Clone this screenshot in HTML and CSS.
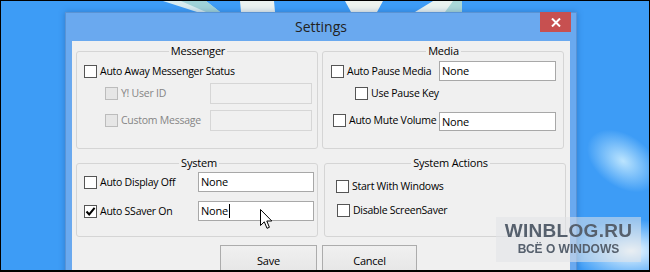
FILE: index.html
```html
<!DOCTYPE html>
<html lang="en">
<head>
<meta charset="utf-8">
<title>Settings</title>
<link rel="stylesheet" href="styles.css">
</head>
<body>
<div class="screen">
  <svg class="wallpaper" width="648" height="270" viewBox="0 0 648 270" aria-hidden="true">
    <defs>
      <radialGradient id="glow1" cx="0.5" cy="0.5" r="0.5">
        <stop offset="0" stop-color="#c9ecff" stop-opacity="0.9"/>
        <stop offset="1" stop-color="#c9ecff" stop-opacity="0"/>
      </radialGradient>
      <radialGradient id="glow2" cx="0.5" cy="0.5" r="0.5">
        <stop offset="0" stop-color="#f2fbff" stop-opacity="1"/>
        <stop offset="1" stop-color="#e6f7ff" stop-opacity="0"/>
      </radialGradient>
    </defs>
    <polygon points="162,0 205,0 219,11 196,11" fill="#d8ecef"/>
    <polygon points="180,0 205,0 219,11 205,11" fill="#9fd2d8"/>
    <polygon points="239,0 273,0 274,11 240,11" fill="#eaf2f0"/>
    <polygon points="344,0 382,0 376,11 350,11" fill="#edf3ef"/>
    <polygon points="432,0 461,0 461,11 414,11" fill="#e9f3f0"/>
    <polygon points="452,0 461,0 461,11 444,11" fill="#a9d8d8"/>
    <ellipse cx="622" cy="160" rx="40" ry="26" fill="url(#glow1)" transform="rotate(35 622 160)"/>
    <ellipse cx="630" cy="250" rx="60" ry="32" fill="url(#glow2)"/>
  </svg>

  <div class="window">
    <div class="titlebar">
      <span></span>
      <span class="title">Settings</span>
      <span class="close-btn">
        <svg width="10" height="9" viewBox="0 0 10 9" aria-hidden="true"><path d="M1 0.5 L9 8.5 M9 0.5 L1 8.5" stroke="#fff" stroke-width="2"/></svg>
      </span>
    </div>
    <div class="client">
      <div class="groups top-groups">
        <fieldset class="group messenger">
          <legend>Messenger</legend>
          <div class="row">
            <span class="cb"></span><span class="lbl">Auto Away Messenger Status</span>
          </div>
          <div class="row indent-m">
            <span class="cb disabled"></span><span class="lbl dim">Y! User ID</span>
            <span class="tb disabled tb-m"></span>
          </div>
          <div class="row indent-m gap5">
            <span class="cb disabled"></span><span class="lbl dim">Custom Message</span>
            <span class="tb disabled tb-m"></span>
          </div>
        </fieldset>
        <fieldset class="group media">
          <legend>Media</legend>
          <div class="row">
            <span class="cb"></span><span class="lbl">Auto Pause Media</span>
            <span class="tb tb-media">None</span>
          </div>
          <div class="row indent-k">
            <span class="cb"></span><span class="lbl">Use Pause Key</span>
          </div>
          <div class="row indent-v gap5">
            <span class="cb"></span><span class="lbl">Auto Mute Volume</span>
            <span class="tb tb-media low">None</span>
          </div>
        </fieldset>
      </div>

      <div class="groups bottom-groups">
        <fieldset class="group system">
          <legend>System</legend>
          <div class="row r20">
            <span class="cb"></span><span class="lbl">Auto Display Off</span>
            <span class="tb tb-sys">None</span>
          </div>
          <div class="row r20 gap9">
            <span class="cb checked">
              <svg width="11" height="11" viewBox="0 0 11 11" aria-hidden="true"><path d="M1.5 5.5 L4.2 8.4 L9.6 1.8" fill="none" stroke="#000" stroke-width="2"/></svg>
            </span><span class="lbl">Auto SSaver On</span>
            <span class="tb tb-sys">None<span class="caret"></span></span>
          </div>
        </fieldset>
        <fieldset class="group actions">
          <legend>System Actions</legend>
          <div class="row r20">
            <span class="cb"></span><span class="lbl">Start With Windows</span>
          </div>
          <div class="row r20 gap4 indent-1">
            <span class="cb"></span><span class="lbl">Disable ScreenSaver</span>
          </div>
        </fieldset>
      </div>

      <div class="buttons">
        <span class="btn save">Save</span>
        <span class="btn cancel">Cancel</span>
      </div>
    </div>
  </div>

  <svg class="pointer" width="13" height="21" viewBox="0 0 13 21" aria-hidden="true">
    <path d="M0.5 0.5 L0.5 16.5 L4.3 12.8 L7 19.3 L9.4 18.3 L6.8 12 L11.8 12 Z" fill="#fff" stroke="#000" stroke-width="1" stroke-linejoin="miter"/>
  </svg>

  <div class="watermark">
    <div class="wm-big">WINBLOG.RU</div>
    <div class="wm-small">ВСЁ О WINDOWS</div>
  </div>
</div>
</body>
</html>
```

FILE: styles.css
```css
* { box-sizing: border-box; }

html, body {
  margin: 0;
  padding: 0;
  background: #000;
}

.screen {
  position: relative;
  width: 650px;
  height: 272px;
  border: 1px solid #000;
  border-bottom-width: 2px;
  overflow: hidden;
  background: #3d9cf6;
  padding: 11px 0 0 64px;
  font-family: "Open Sans", "Noto Sans", sans-serif;
  font-size: 10.5px;
  letter-spacing: -0.25px;
  color: #000;
}

.wallpaper {
  position: absolute;
  left: 0;
  top: 0;
}

.window {
  position: relative;
  width: 512px;
  height: 280px;
  background: #6aa9ef;
  border: 1px solid #5a93d4;
  border-bottom: none;
  display: flex;
  flex-direction: column;
  box-shadow: 0 0 6px rgba(20, 60, 120, 0.35);
}

.titlebar {
  height: 28px;
  display: grid;
  grid-template-columns: 1fr auto 1fr;
  align-items: start;
}

.title {
  font-size: 14px;
  letter-spacing: 0;
  line-height: 18px;
  padding-top: 5px;
  color: #222;
}

.close-btn {
  justify-self: end;
  margin-top: -1px;
  margin-right: 5px;
  width: 31px;
  height: 20px;
  background: #c75050;
  display: flex;
  align-items: center;
  justify-content: center;
}

.client {
  flex: 1;
  margin: 0 6px;
  background: #f0f0f0;
  padding: 2px 0 0 4px;
}

.groups {
  display: grid;
  grid-template-columns: 242px 242px;
  column-gap: 4px;
}

.bottom-groups {
  margin-top: 6px;
  column-gap: 6px;
}

.group {
  margin: 0;
  min-width: 0;
  border: 1px solid #d5d5d5;
  border-radius: 3px;
}

.group legend {
  margin-left: auto;
  margin-right: auto;
  padding: 0 2px;
  line-height: 16px;
  font-size: 11px;
  letter-spacing: -0.2px;
}

.messenger { padding: 1px 5px 17px 7px; }
.media { padding: 1px 7px 17px 8px; }
.system { padding: 1px 3px 15px 7px; }
.actions { padding: 5px 0 0 11px; }

.row {
  height: 22px;
  display: flex;
  align-items: center;
}

.r20 { height: 20px; }
.gap4 { margin-top: 4px; }
.gap5 { margin-top: 5px; }
.gap9 { margin-top: 9px; }

.indent-m { padding-left: 21px; }
.indent-k { padding-left: 24px; }
.indent-v { padding-left: 2px; }
.indent-1 { padding-left: 1px; }

.cb {
  flex: none;
  width: 13px;
  height: 13px;
  border: 1px solid #555;
  background: #fff;
  display: flex;
  align-items: center;
  justify-content: center;
}

.cb.disabled {
  border-color: #bcbcbc;
  background: #e6e6e6;
}

.lbl {
  margin-left: 3px;
  line-height: 16px;
  white-space: nowrap;
  min-width: 0;
}

.lbl.dim { color: #858585; }

.tb {
  margin-left: auto;
  flex: none;
  height: 20px;
  border: 1px solid #a8a8a8;
  background: #fff;
  padding-left: 2px;
  line-height: 18px;
  font-size: 11px;
  display: flex;
  align-items: center;
}

.tb.disabled {
  border-color: #d6d6d6;
  background: #f0f0f0;
}

.tb-m { width: 102px; height: 21px; }
.tb-media { width: 117px; }
.tb-media.low { margin-top: 3px; height: 19px; }
.tb-sys { width: 116px; }

.caret {
  display: inline-block;
  width: 1px;
  height: 14px;
  background: #000;
  margin-left: 1px;
}

.buttons {
  display: flex;
  gap: 5px;
  margin: 8px 0 0 144px;
}

.btn {
  height: 32px;
  border: 1px solid #acacac;
  background: linear-gradient(#f0f0f0, #e5e5e5);
  display: flex;
  align-items: center;
  justify-content: center;
  padding-bottom: 1px;
  font-size: 11px;
}

.save { width: 97px; }
.cancel { width: 95px; }

.pointer {
  position: absolute;
  left: 259px;
  top: 208px;
}

.watermark {
  position: absolute;
  left: 495px;
  top: 216px;
  width: 145px;
  height: 45px;
  background: rgba(225, 228, 232, 0.55);
  color: #56606d;
  font-family: "Liberation Sans", "DejaVu Sans", sans-serif;
  font-weight: bold;
  letter-spacing: 0;
  text-align: center;
  filter: blur(0.7px);
  padding-top: 4px;
}

.wm-big {
  font-size: 19px;
  line-height: 20px;
  letter-spacing: 0.3px;
}

.wm-small {
  font-size: 12px;
  line-height: 14px;
  margin-top: 1px;
}
```
